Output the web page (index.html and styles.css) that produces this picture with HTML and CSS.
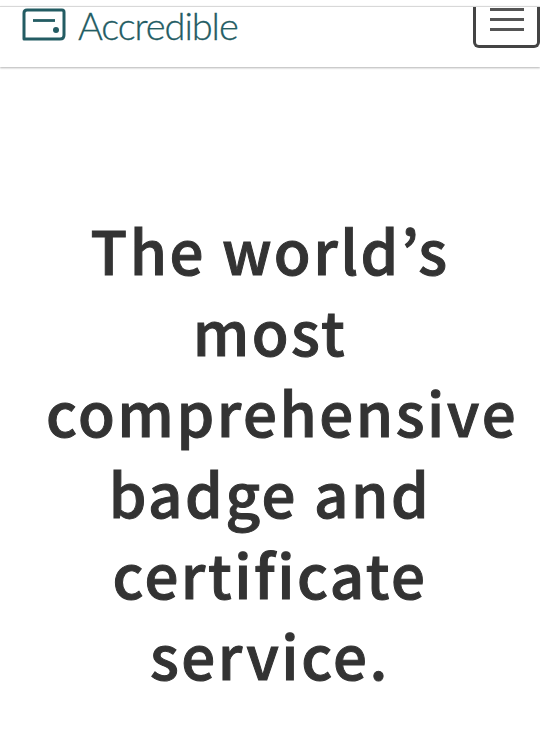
FILE: index.html
```html
<!DOCTYPE html>
<html lang="en">
<head>
<meta charset="utf-8">
<title>Accredible</title>
<link rel="stylesheet" href="styles.css">
</head>
<body>
<header class="header">
  <a class="brand" href="#">
    <svg class="logo" viewBox="0 0 44 33" width="44" height="33" aria-hidden="true">
      <path d="M5 2H40Q42 2 42 4V27Q42 31 38 31H2V5Q2 2 5 2Z" fill="none" stroke="#235c63" stroke-width="3" stroke-linejoin="round"/>
      <path d="M11 12.500H33" stroke="#235c63" stroke-width="2.800"/>
      <circle cx="34" cy="22" r="3" fill="#235c63"/>
    </svg>
    <span class="brand-name">Accredible</span>
  </a>
  <button class="menu" type="button" aria-label="Menu">
    <span class="bar"></span><span class="bar"></span><span class="bar"></span>
  </button>
</header>
<main class="hero">
  <h1 class="title">The world’s most comprehensive badge and certificate service.</h1>
</main>
</body>
</html>
```

FILE: styles.css
```css
* { box-sizing: border-box; }
html, body { margin: 0; height: 100%; background: #fff; overflow: hidden; }
body { padding-top: 6px; }
.header {
  height: 61px;
  border-top: 1px solid #d8d8d8;
  box-shadow: 0 1px 2px rgba(0,0,0,.3);
  display: flex;
  justify-content: space-between;
  align-items: flex-start;
  padding-left: 22px;
}
.brand { display: flex; align-items: flex-start; gap: 12px; text-decoration: none; padding-top: 1px; }
.logo { display: block; }
.brand-name {
  font-family: "Lato", sans-serif;
  font-weight: 300;
  font-size: 38px;
  line-height: 34px;
  letter-spacing: -1.100px;
  color: #235c63;
  -webkit-text-stroke: 0.3px #235c63;
}
.menu {
  width: 67px;
  height: 41px;
  background: #fff;
  border: 3px solid #444;
  border-top: 0;
  border-radius: 0 0 6px 6px;
  display: flex;
  flex-direction: column;
  align-items: center;
  justify-content: flex-end;
  gap: 7px;
  padding: 0 0 14px;
}
.bar { width: 34px; height: 3px; background: #555; }
.hero { padding: 141px 46px 0; }
.title {
  margin: 0;
  text-align: center;
  font-family: "Noto Sans CJK JP", "Noto Sans", sans-serif;
  font-weight: 500;
  font-size: 60px;
  line-height: 81px;
  letter-spacing: 2.500px;
  color: #333;
  -webkit-text-stroke: 1px #333;
}
```
